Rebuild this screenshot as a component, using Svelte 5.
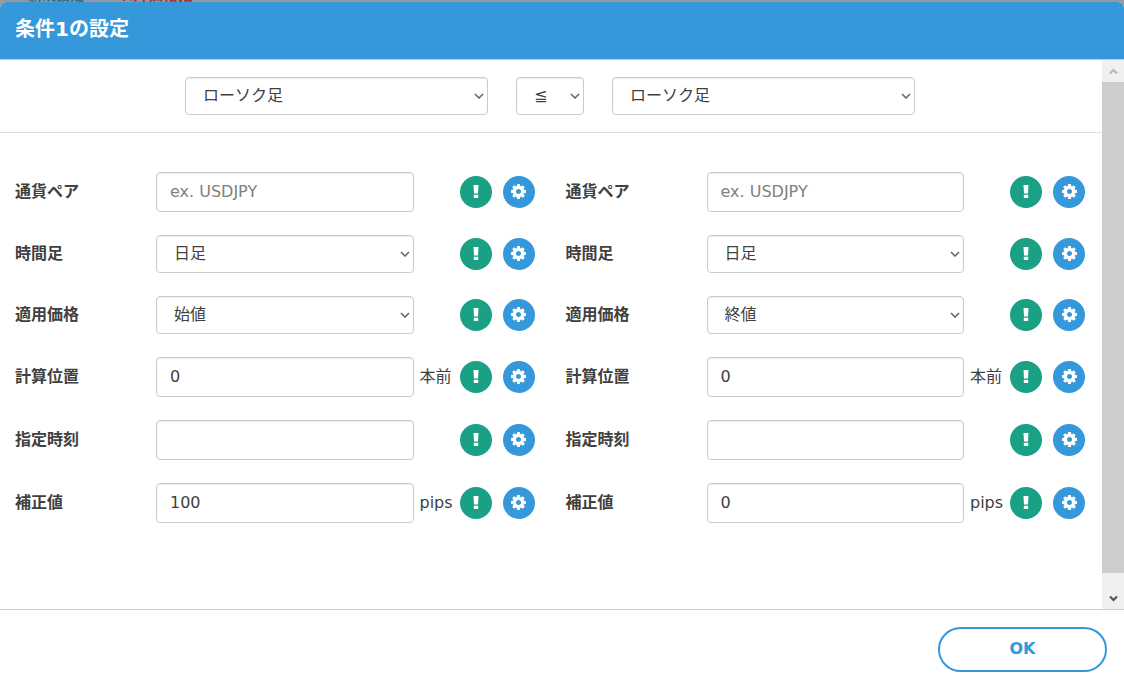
<script>
	let conditions = [
		{ id: 'left', type: 'ローソク足', price: '始値', shift: '0', time: '', offset: '100', pair: '', timeframe: '日足' },
		{ id: 'right', type: 'ローソク足', price: '終値', shift: '0', time: '', offset: '0', pair: '', timeframe: '日足' }
	]
	let operator = '≦'

	const types = ['ローソク足', '移動平均', 'RSI']
	const operators = ['≦', '<', '=', '>', '≧']

	const fields = [
		{ key: 'pair', label: '通貨ペア', placeholder: 'ex. USDJPY' },
		{ key: 'timeframe', label: '時間足', options: ['1分足', '1時間足', '日足', '週足'] },
		{ key: 'price', label: '適用価格', options: ['始値', '高値', '安値', '終値'] },
		{ key: 'shift', label: '計算位置', unit: '本前' },
		{ key: 'time', label: '指定時刻' },
		{ key: 'offset', label: '補正値', unit: 'pips' }
	]
</script>

<div class="page">
	<div class="backdrop" aria-hidden="true">
		<span class="behind">新規設定</span>
		<span class="behind required">以外価格指</span>
	</div>

	<div class="modal" role="dialog" aria-labelledby="title">
		<header>
			<h1 id="title">条件1の設定</h1>
		</header>

		<div class="body">
			<div class="content">
				<div class="compare">
					<select class="type" aria-label="左辺" bind:value={conditions[0].type}>
						{#each types as type}
							<option>{type}</option>
						{/each}
					</select>
					<select class="operator" aria-label="比較" bind:value={operator}>
						{#each operators as op}
							<option>{op}</option>
						{/each}
					</select>
					<select class="type" aria-label="右辺" bind:value={conditions[1].type}>
						{#each types as type}
							<option>{type}</option>
						{/each}
					</select>
				</div>

				<div class="columns">
					{#each conditions as condition}
						<div class="column">
							{#each fields as field}
								<div class="row">
									<label for="{condition.id}-{field.key}">{field.label}</label>
									{#if field.options}
										<select id="{condition.id}-{field.key}" bind:value={condition[field.key]}>
											{#each field.options as option}
												<option>{option}</option>
											{/each}
										</select>
									{:else}
										<input
											id="{condition.id}-{field.key}"
											type="text"
											placeholder={field.placeholder}
											bind:value={condition[field.key]}
										/>
									{/if}
									<span class="unit">{field.unit || ''}</span>
									<div class="actions">
										<button class="round info" type="button" aria-label="説明">
											<svg width="6" height="13" viewBox="0 0 6 13">
												<path d="M.5 0h5L5 8.500H1zM.8 9.800h4.400V13H.8z" />
											</svg>
										</button>
										<button class="round config" type="button" aria-label="設定">
											<svg width="15" height="15" viewBox="0 0 1536 1536">
												<path
													d="M1024 768q0-106-75-181t-181-75-181 75-75 181 75 181 181 75 181-75 75-181zm512-109v222q0 12-8 23t-20 13l-185 28q-19 54-39 91 35 50 107 138 10 12 10 25t-9 23q-27 37-99 108t-94 71q-12 0-26-9l-138-108q-44 23-91 38-16 136-29 186-7 28-36 28H657q-14 0-24.500-8.500T621 1506l-28-184q-49-16-90-37l-141 107q-10 9-25 9-14 0-25-11-126-114-165-168-7-10-7-23 0-12 8-23 15-21 51-66.500t54-70.500q-27-50-41-99L29 913q-13-2-21-12.500T0 877V655q0-12 8-23t19-13l186-28q14-46 39-92-40-57-107-138-10-12-10-24 0-10 9-23 26-36 98.500-107.500T337 135q13 0 26 10l138 107q44-23 91-38 16-136 29-186 7-28 36-28h222q14 0 24.500 8.500T915 30l28 184q49 16 90 37l142-107q9-9 24-9 13 0 25 10 129 119 165 170 7 8 7 22 0 12-8 23-15 21-51 66.500t-54 70.500q26 50 41 98l183 28q13 2 21 12.500t8 23.500z"
												/>
											</svg>
										</button>
									</div>
								</div>
							{/each}
						</div>
					{/each}
				</div>
			</div>

			<div class="scrollbar" aria-hidden="true">
				<svg class="up" width="22" height="22" viewBox="0 0 22 22">
					<path d="M8 13.500L11.500 10l3.500 3.500" />
				</svg>
				<div class="thumb"></div>
				<svg class="down" width="22" height="22" viewBox="0 0 22 22">
					<path d="M8 9.500l3.500 3.500L15 9.500" />
				</svg>
			</div>
		</div>

		<footer>
			<button class="ok" type="button">OK</button>
		</footer>
	</div>
</div>

<style>
	:global(body) {
		margin: 0;
		color: #404040;
		font-family: 'DejaVu Sans', 'Noto Sans CJK JP', sans-serif;
		font-size: 16px;
	}
	.page {
		display: flex;
		flex-direction: column;
		min-height: 100vh;
		background: #999;
	}
	.backdrop {
		display: flex;
		align-items: flex-end;
		gap: 34px;
		height: 2px;
		padding-left: 28px;
		overflow: hidden;
	}
	.behind {
		color: #2d7088;
		font-size: 14px;
		font-weight: bold;
		line-height: 14px;
	}
	.required {
		color: #a33;
		font-size: 15px;
	}
	.modal {
		flex: 1;
		display: flex;
		flex-direction: column;
		border-radius: 6px 6px 0 0;
		background: #fff;
		overflow: hidden;
	}
	header {
		padding: 13px 15px 16px;
		border-bottom: 1px solid #b5cfe2;
		background: #3498db;
	}
	h1 {
		margin: 0;
		color: #fff;
		font-size: 20px;
		line-height: 28px;
	}
	.body {
		flex: 1;
		display: flex;
	}
	.content {
		flex: 1;
		min-width: 0;
	}
	.compare {
		display: flex;
		justify-content: center;
		gap: 28px;
		padding: 17px 16px 17px 14px;
		border-bottom: 1px solid #ddd;
	}
	.columns {
		display: grid;
		grid-template-columns: 1fr 1fr;
		padding: 39px 1px 39px 0;
	}
	.column {
		display: flex;
		flex-direction: column;
		gap: 23px;
		padding: 0 16px 0 15px;
	}
	.row {
		display: grid;
		grid-template-columns: 141px 1fr 46px 75px;
		align-items: center;
	}
	label {
		font-weight: bold;
		line-height: 24px;
	}
	input,
	select {
		box-sizing: border-box;
		width: 100%;
		height: 38px;
		padding: 0 13px 2px;
		border: 1px solid #ccc;
		border-radius: 4px;
		background-color: #fff;
		box-shadow: inset 0 1px 1px rgba(0, 0, 0, 0.08);
		color: #404040;
		font: inherit;
	}
	select {
		appearance: none;
		padding-left: 17px;
		background-image: url("data:image/svg+xml,%3Csvg xmlns='http://www.w3.org/2000/svg' width='10' height='6' viewBox='0 0 10 6'%3E%3Cpath d='M1 1l4 4 4-4' fill='none' stroke='%23666' stroke-width='1.600'/%3E%3C/svg%3E");
		background-repeat: no-repeat;
		background-position: right 3px center;
	}
	input {
		height: 40px;
	}
	input::placeholder {
		color: #808080;
	}
	.type {
		width: 303px;
	}
	.operator {
		width: 68px;
	}
	.unit {
		padding-left: 6px;
		line-height: 24px;
	}
	.actions {
		display: flex;
		gap: 11px;
	}
	.round {
		display: flex;
		align-items: center;
		justify-content: center;
		width: 32px;
		height: 32px;
		padding: 0 0 2px;
		border: 0;
		border-radius: 50%;
		fill: #fff;
		cursor: pointer;
	}
	.info {
		background: #1aa085;
	}
	.config {
		background: #3498db;
	}
	.scrollbar {
		display: flex;
		flex-direction: column;
		width: 22px;
		background: #f0f0f0;
	}
	.scrollbar path {
		fill: none;
		stroke: #b8b8b8;
		stroke-width: 2;
	}
	.scrollbar .down path {
		stroke: #505050;
	}
	.thumb {
		flex: 1;
		margin-bottom: 14px;
		background: #cdcdcd;
	}
	footer {
		display: flex;
		justify-content: flex-end;
		padding: 17px 17px 21px;
		border-top: 1px solid #ccc;
	}
	.ok {
		width: 169px;
		height: 45px;
		padding: 0 0 2px;
		border: 2px solid #3498db;
		border-radius: 23px;
		background: #fff;
		color: #3498db;
		font: inherit;
		font-weight: bold;
		cursor: pointer;
	}
</style>
